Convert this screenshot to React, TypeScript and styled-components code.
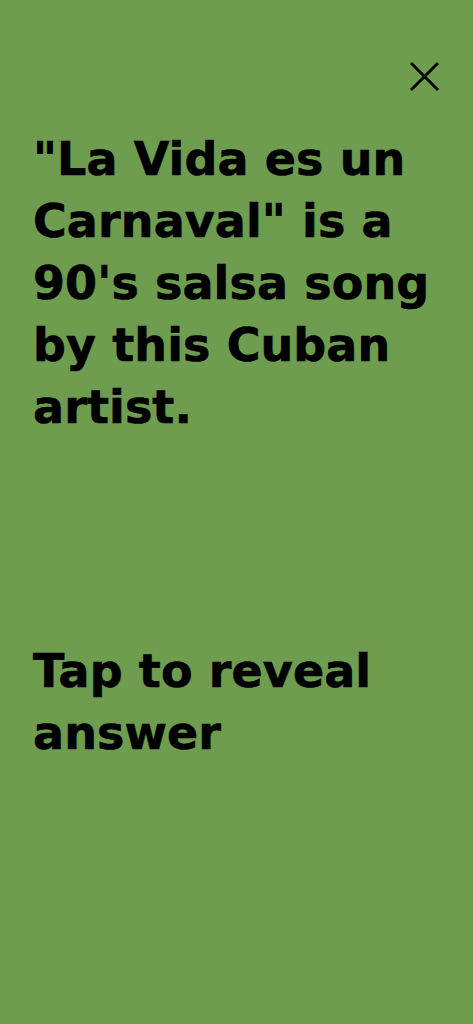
import React from "react";
import styled, { createGlobalStyle } from "styled-components";

const Global = createGlobalStyle`
  html, body { margin: 0; padding: 0; background: #6f9d50; }
  * { box-sizing: border-box; }
`;

const Screen = styled.div`
  width: 473px;
  min-height: 1024px;
  background: #6f9d50;
  display: flex;
  flex-direction: column;
  padding: 0 33px;
  font-family: "DejaVu Sans", "Open Sans", sans-serif;
  color: #000;
`;

const TopBar = styled.div`
  display: flex;
  justify-content: flex-end;
  padding-top: 60px;
  height: 92px;
`;

const CloseButton = styled.button`
  width: 32px;
  height: 32px;
  padding: 0;
  border: none;
  background: transparent;
  display: flex;
  align-items: center;
  justify-content: center;
  cursor: pointer;
`;

const BigText = styled.p<{ $top: number }>`
  margin: ${(p) => p.$top}px 0 0;
  font-size: 46px;
  font-weight: 700;
  line-height: 62px;
  letter-spacing: 0.1px;
  -webkit-text-stroke: 0.6px #000;
`;

const Line = styled.span`
  display: block;
  white-space: nowrap;
`;

export default function App() {
  return (
    <>
      <Global />
      <Screen>
        <TopBar>
          <CloseButton aria-label="Close">
            <svg width="32" height="32" viewBox="0 0 32 32">
              <path d="M3 3 L30 30 M30 3 L3 30" stroke="#000" strokeWidth="3" strokeLinecap="butt" />
            </svg>
          </CloseButton>
        </TopBar>
        <BigText $top={36}>
          <Line>"La Vida es un</Line>
          <Line>Carnaval" is a</Line>
          <Line>90's salsa song</Line>
          <Line>by this Cuban</Line>
          <Line>artist.</Line>
        </BigText>
        <BigText $top={202}>
          <Line>Tap to reveal</Line>
          <Line>answer</Line>
        </BigText>
      </Screen>
    </>
  );
}
